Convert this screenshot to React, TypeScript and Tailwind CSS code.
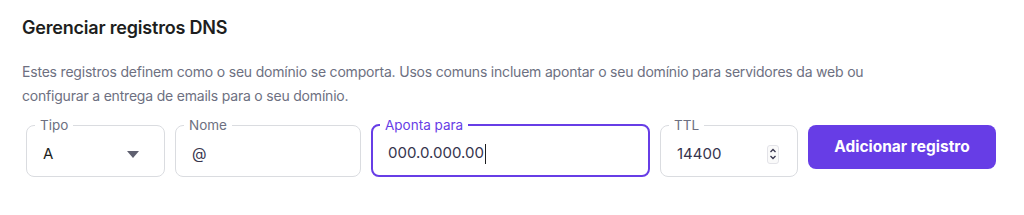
import React from "react";

function Field({
	label,
	width,
	focused = false,
	children,
}: {
	label: string;
	width: string;
	focused?: boolean;
	children: React.ReactNode;
}) {
	return (
		<fieldset
			className={`${width} h-[59px] rounded-lg -mt-[7px] flex items-center ${
				focused ? "border-2 border-[#673de6] px-[7px]" : "border border-[#dadce0] px-[8px]"
			}`}
		>
			<legend
				className={`px-[5px] text-[13.5px] leading-[14px] ${focused ? "text-[#673de6]" : "text-[#6d7081]"}`}
			>
				{label}
			</legend>
			{children}
		</fieldset>
	);
}

export default function App() {
	return (
		<div className="w-[1024px] h-[215px] bg-white px-[22px] pt-[15px] font-['Inter',sans-serif] text-[#1d1e20]">
			<h2 className="text-[18px] leading-[26px] font-semibold tracking-[-0.2px]">Gerenciar registros DNS</h2>
			<p className="mt-[19px] text-[14px] leading-[24px] text-[#6d7081] max-w-[860px] tracking-[-0.2px]">
				Estes registros definem como o seu domínio se comporta. Usos comuns incluem apontar o seu domínio para servidores da web ou configurar a entrega de emails para o seu domínio.
			</p>

			<div className="mt-[17px] ml-[4px] flex items-start gap-[10px]">
				<Field label="Tipo" width="w-[139px]">
					<div className="flex w-full items-center justify-between pl-[8px] pr-[17px]">
						<span className="text-[15px]">A</span>
						<svg width="12" height="7" viewBox="0 0 12 7" aria-hidden>
							<path d="M0 0 L12 0 L6 7 Z" fill="#5f6070" />
						</svg>
					</div>
				</Field>

				<Field label="Nome" width="w-[186px]">
					<span className="pl-[8px] text-[15px] text-[#36344d]">@</span>
				</Field>

				<Field label="Aponta para" width="w-[279px]" focused>
					<span className="pl-[8px] text-[15px] text-[#36344d] flex items-center">
						000.0.000.00
						<span className="ml-[1px] inline-block w-px h-[20px] bg-[#1d1e20]" />
					</span>
				</Field>

				<Field label="TTL" width="w-[138px]">
					<div className="flex w-full items-center justify-between pl-[8px] pr-[10px]">
						<span className="text-[15px] text-[#36344d]">14400</span>
						<span className="flex h-[19px] w-[12px] flex-col items-center justify-center rounded-[3px] border border-[#e3e3e8] bg-[#fafafa]">
							<svg width="8" height="14" viewBox="0 0 8 14" aria-hidden>
								<path d="M1.5 5 L4 2.5 L6.5 5" fill="none" stroke="#36344d" strokeWidth="1.3" />
								<path d="M1.5 9 L4 11.5 L6.5 9" fill="none" stroke="#36344d" strokeWidth="1.3" />
							</svg>
						</span>
					</div>
				</Field>

				<button className="h-[44px] w-[188px] rounded-lg bg-[#673de6] text-[15.5px] font-bold text-white">
					Adicionar registro
				</button>
			</div>
		</div>
	);
}
